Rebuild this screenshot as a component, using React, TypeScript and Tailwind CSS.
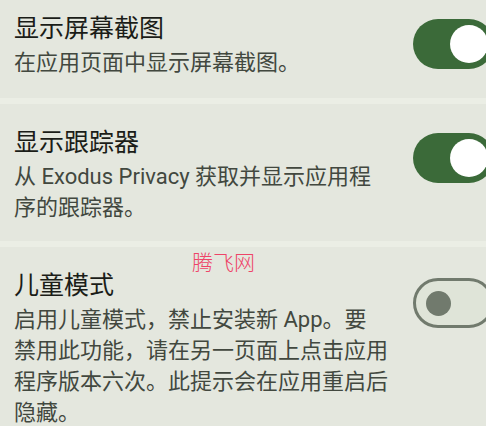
import type { ReactNode } from 'react'

function Switch({ on }: { on: boolean }) {
    if (on) {
        return (
            <div className="shrink-0 mt-[7px] w-[81px] h-[50px] rounded-full bg-[#3b6a39] flex items-center justify-end pr-[6px]">
                <div className="w-[38px] h-[38px] rounded-full bg-white"></div>
            </div>
        )
    }
    return (
        <div className="shrink-0 mt-[9px] w-[81px] h-[50px] rounded-full bg-[#dfe4d8] border-[3px] border-[#717a6d] flex items-center pl-[10px]">
            <div className="w-[25px] h-[25px] rounded-full bg-[#717a6d]"></div>
        </div>
    )
}

interface SettingRowProps {
    title: string
    lines: ReactNode[]
    on: boolean
    className?: string
}

function SettingRow({ title, lines, on, className }: SettingRowProps) {
    return (
        <div className={`flex items-start pl-[14px] ${className ?? ''}`}>
            <div className="w-[375px] shrink-0">
                <div className="text-[25px] leading-[34px] text-[#1b1d18]">{title}</div>
                <div className="mt-[1px] text-[22px] leading-[31px] text-[#42483f]">
                    {lines.map((line, i) => (
                        <div key={i} className="whitespace-nowrap">{line}</div>
                    ))}
                </div>
            </div>
            <div className="ml-[24px]">
                <Switch on={on} />
            </div>
        </div>
    )
}

export default function App() {
    return (
        <div
            className="relative w-[486px] h-[426px] overflow-hidden bg-[#e4e7de]"
            style={{ fontFamily: 'Roboto, "Noto Sans CJK SC", sans-serif' }}
        >
            <SettingRow
                className="pt-[12px] pb-[20px]"
                title="显示屏幕截图"
                lines={['在应用页面中显示屏幕截图。']}
                on={true}
            />
            <div className="h-[6px] bg-[#ebeee5]"></div>
            <SettingRow
                className="pt-[22px] pb-[18px]"
                title="显示跟踪器"
                lines={['从 Exodus Privacy 获取并显示应用程', '序的跟踪器。']}
                on={true}
            />
            <div className="h-[6px] bg-[#ebeee5]"></div>
            <SettingRow
                className="pt-[22px] pb-[20px]"
                title="儿童模式"
                lines={[
                    '启用儿童模式，禁止安装新 App。要',
                    '禁用此功能，请在另一页面上点击应用',
                    '程序版本六次。此提示会在应用重启后',
                    '隐藏。',
                ]}
                on={false}
            />

            {/* watermark */}
            <div className="absolute left-[192px] top-[249px] text-[21px] leading-[28px] text-[#ee4468] font-light">
                腾飞网
            </div>
        </div>
    )
}
